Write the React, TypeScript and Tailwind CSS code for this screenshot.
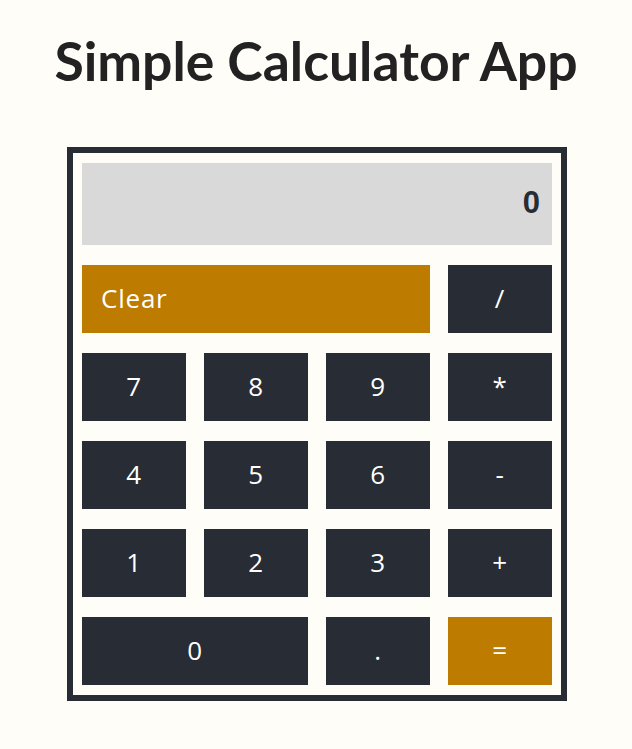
import { useState } from "react";

const dark = "bg-[#282c35] text-white";
const gold = "bg-[#bd7b00] text-white";

export default function App() {
  const [display, setDisplay] = useState("0");

  const press = (v: string) => {
    if (v === "Clear") return setDisplay("0");
    if (v === "=") {
      try {
        // eslint-disable-next-line no-new-func
        setDisplay(String(Function(`return (${display})`)()));
      } catch {
        setDisplay("Error");
      }
      return;
    }
    setDisplay((d) => (d === "0" && v !== "." ? v : d + v));
  };

  const keys: { label: string; cls: string; span?: string; left?: boolean }[] = [
    { label: "Clear", cls: gold, span: "col-span-3", left: true },
    { label: "/", cls: dark },
    { label: "7", cls: dark },
    { label: "8", cls: dark },
    { label: "9", cls: dark },
    { label: "*", cls: dark },
    { label: "4", cls: dark },
    { label: "5", cls: dark },
    { label: "6", cls: dark },
    { label: "-", cls: dark },
    { label: "1", cls: dark },
    { label: "2", cls: dark },
    { label: "3", cls: dark },
    { label: "+", cls: dark },
    { label: "0", cls: dark, span: "col-span-2" },
    { label: ".", cls: dark },
    { label: "=", cls: gold },
  ];

  return (
    <main className="min-h-screen bg-[#fffdf8] flex flex-col items-center font-['Open_Sans',sans-serif]">
      <h1 className="mt-[18px] mb-[43px] text-[53.5px] leading-[1.6] font-bold text-[#222222] font-['Lato',sans-serif]">
        Simple Calculator App
      </h1>

      <div className="ml-[2px] w-[500px] border-[6px] border-[#282c35] px-[9px] py-[10px]">
        <div className="h-[82px] bg-[#d9d9d9] flex items-center justify-end pr-[12px] text-[31px] font-bold text-[#282c35] font-['Liberation_Sans',sans-serif]">
          {display}
        </div>

        <div className="mt-[20px] grid grid-cols-4 gap-x-[18px] gap-y-[20px]">
          {keys.map((k) => (
            <button
              key={k.label}
              onClick={() => press(k.label)}
              className={`h-[68px] text-[26px] tracking-[0.03em] flex items-center ${k.left ? "justify-start pl-[19px]" : "justify-center"} ${k.cls} ${k.span ?? ""}`}
            >
              {k.label}
            </button>
          ))}
        </div>
      </div>
    </main>
  );
}
